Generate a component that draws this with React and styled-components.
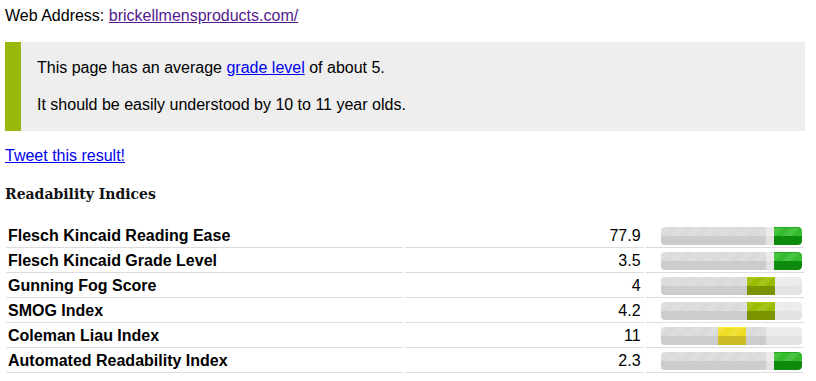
import styled, { createGlobalStyle } from "styled-components";

const GlobalStyle = createGlobalStyle`
  body {
    margin: 0;
    background: #fff;
    font-family: "Liberation Sans", Arial, sans-serif;
    font-size: 16px;
    line-height: 1.3;
    color: #000;
  }
`;

const Page = styled.div`
  width: 800px;
  padding: 6px 11px 0 5px;
`;

const Line = styled.p`
  margin: 0 0 15px;
`;

const Link = styled.a`
  color: ${(p) => (p.$visited ? "#551a8b" : "#0000ee")};
  text-decoration: underline;
`;

const Summary = styled.div`
  background: #eeeeee;
  border-left: 16px solid #99b90c;
  padding: 0 16px;
  margin-bottom: 15px;
  overflow: hidden;

  p {
    margin: 16px 0;
  }
`;

const Heading = styled.h3`
  margin: 17px 0 18px;
  font-family: "DejaVu Serif", Georgia, serif;
  font-weight: bold;
  font-size: 14px;
  line-height: 21px;
  color: #111;
`;

const Table = styled.table`
  width: 802px;
  margin-left: -1px;
  border-spacing: 2px;
  table-layout: fixed;
`;

const Cell = styled.td`
  border-bottom: 1px solid #dddddd;
  height: 22px;
  padding: 0 ${(p) => p.$padRight || 0}px 0 ${(p) => p.$padLeft || 0}px;
  line-height: 22px;
  vertical-align: middle;
  text-align: ${(p) => p.$align || "left"};
  font-weight: ${(p) => (p.$bold ? "bold" : "normal")};
  white-space: nowrap;
`;

const Track = styled.div`
  display: flex;
  width: 141px;
  height: 18px;
  margin: 2px 0 2px 15px;
  border-radius: 4px;
  overflow: hidden;
  background:
    repeating-linear-gradient(135deg, rgba(255, 255, 255, 0.1) 0 6px, rgba(255, 255, 255, 0) 6px 12px) top / 100% 9px no-repeat,
    linear-gradient(90deg, rgba(255, 255, 255, 0) 104px, rgba(255, 255, 255, 0.45) 106px),
    linear-gradient(#dadada 0 9px, #cccccc 9px 18px);
`;

const fills = {
  green: ["#35bb2e", "#0e8a0c", "#22aa1e"],
  olive: ["#99bb00", "#7a9400", "#aacc00"],
  yellow: ["#eedd22", "#ccbb22", "#ffee33"],
};

const Fill = styled.div`
  flex: none;
  width: 28px;
  height: 18px;
  box-sizing: border-box;
  border-top: 1px solid ${(p) => fills[p.$tone][2]};
  border-radius: ${(p) => (p.$last ? "0 4px 4px 0" : "0")};
  background:
    repeating-linear-gradient(135deg, rgba(255, 255, 255, 0.1) 0 6px, rgba(255, 255, 255, 0) 6px 12px) top / 100% 8px no-repeat,
    linear-gradient(${(p) => fills[p.$tone][0]} 0 8px, ${(p) => fills[p.$tone][1]} 8px 17px);
`;

const indices = [
  { name: "Flesch Kincaid Reading Ease", value: "77.9", slot: 4, tone: "green" },
  { name: "Flesch Kincaid Grade Level", value: "3.5", slot: 4, tone: "green" },
  { name: "Gunning Fog Score", value: "4", slot: 3, tone: "olive" },
  { name: "SMOG Index", value: "4.2", slot: 3, tone: "olive" },
  { name: "Coleman Liau Index", value: "11", slot: 2, tone: "yellow" },
  { name: "Automated Readability Index", value: "2.3", slot: 4, tone: "green" },
];

const slotLeft = [0, 29, 57, 86, 113];

function ScoreBar({ slot, tone }) {
  return (
    <Track>
      <Fill $tone={tone} $last={slot === 4} style={{ marginLeft: slotLeft[slot] }} />
    </Track>
  );
}

export default function App() {
  return (
    <>
      <GlobalStyle />
      <Page>
        <Line>
          Web Address: <Link $visited href="#">brickellmensproducts.com/</Link>
        </Line>

        <Summary>
          <p>
            This page has an average <Link href="#">grade level</Link> of about 5.
          </p>
          <p>It should be easily understood by 10 to 11 year olds.</p>
        </Summary>

        <Line>
          <Link href="#">Tweet this result!</Link>
        </Line>

        <Heading>Readability Indices</Heading>

        <Table>
          <colgroup>
            <col style={{ width: 396 }} />
            <col style={{ width: 238 }} />
            <col style={{ width: 158 }} />
          </colgroup>
          <tbody>
            {indices.map((row) => (
              <tr key={row.name}>
                <Cell $bold $padLeft={2}>{row.name}</Cell>
                <Cell $align="right" $padRight={3}>{row.value}</Cell>
                <Cell>
                  <ScoreBar slot={row.slot} tone={row.tone} />
                </Cell>
              </tr>
            ))}
          </tbody>
        </Table>
      </Page>
    </>
  );
}
